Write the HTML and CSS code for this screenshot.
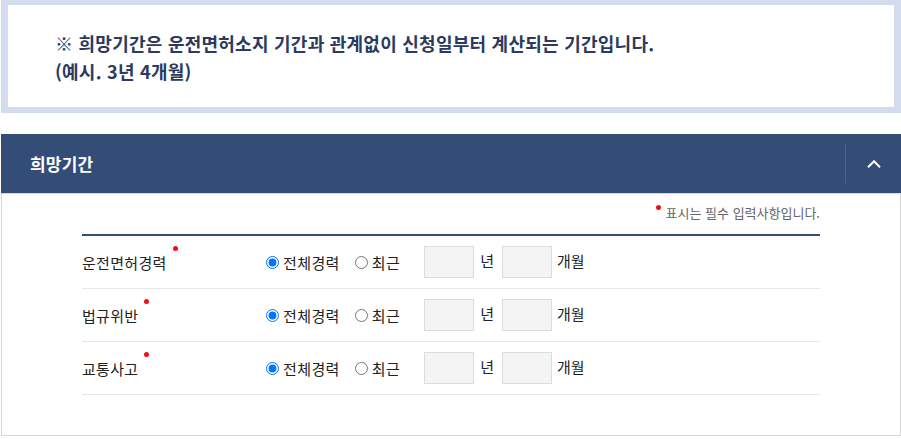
FILE: index.html
```html
<!DOCTYPE html>
<html lang="ko">
<head>
<meta charset="utf-8">
<title>희망기간</title>
<link rel="stylesheet" href="styles.css">
</head>
<body>
<div class="page">
  <div class="notice">
    <p>※ 희망기간은 운전면허소지 기간과 관계없이 신청일부터 계산되는 기간입니다.<br>(예시. 3년 4개월)</p>
  </div>

  <section class="panel">
    <div class="panel-head">
      <h2 class="panel-title">희망기간</h2>
      <button class="toggle" type="button" aria-label="접기">
        <svg width="14" height="8" viewBox="0 0 14 8"><polyline points="1,7.2 7,1.2 13,7.2" fill="none" stroke="#fff" stroke-width="2"/></svg>
      </button>
    </div>
    <div class="panel-body">
      <p class="req-note"><span class="dot"></span>표시는 필수 입력사항입니다.</p>
      <div class="table">
        <div class="row">
          <div class="label"><span class="req">운전면허경력</span></div>
          <label class="opt"><input type="radio" name="r1" checked><span>전체경력</span></label>
          <label class="opt"><input type="radio" name="r1"><span>최근</span></label>
          <span class="box"></span><span class="unit u-year">년</span>
          <span class="box"></span><span class="unit u-month">개월</span>
        </div>
        <div class="row">
          <div class="label"><span class="req">법규위반</span></div>
          <label class="opt"><input type="radio" name="r2" checked><span>전체경력</span></label>
          <label class="opt"><input type="radio" name="r2"><span>최근</span></label>
          <span class="box"></span><span class="unit u-year">년</span>
          <span class="box"></span><span class="unit u-month">개월</span>
        </div>
        <div class="row">
          <div class="label"><span class="req">교통사고</span></div>
          <label class="opt"><input type="radio" name="r3" checked><span>전체경력</span></label>
          <label class="opt"><input type="radio" name="r3"><span>최근</span></label>
          <span class="box"></span><span class="unit u-year">년</span>
          <span class="box"></span><span class="unit u-month">개월</span>
        </div>
      </div>
    </div>
  </section>
</div>
</body>
</html>
```

FILE: styles.css
```css
* { box-sizing: border-box; }
html, body { margin: 0; padding: 0; background: #fff; }
body {
  font-family: "Noto Sans CJK KR", "Noto Sans", sans-serif;
  color: #333;
}
.page { padding-left: 1px; width: 901px; }

.notice {
  border-style: solid;
  border-color: #d3dcec;
  border-width: 5px 7px 6px 7px;
  background: #fff;
  height: 113px;
  padding: 24px 0 0 47px;
}
.notice p {
  margin: 0;
  font-size: 18px;
  font-weight: 700;
  line-height: 28px;
  color: #2b3a5e;
  letter-spacing: 0.25px;
}

.panel { margin-top: 21px; }
.panel-head {
  height: 59px;
  background: #344d77;
  display: flex;
  align-items: center;
  justify-content: space-between;
}
.panel-title {
  margin: 0 0 0 29px;
  font-size: 17px;
  font-weight: 700;
  color: #fff;
  line-height: 20px;
  letter-spacing: 0.2px;
}
.toggle {
  width: 56px;
  height: 39px;
  border: 0;
  border-left: 1px solid #4b6491;
  background: transparent;
  padding: 0;
  display: flex;
  align-items: center;
  justify-content: center;
  margin: 0;
}
.panel-body {
  border: 1px solid #d6d6d6;
  padding: 10px 80px 40px 80px;
}
.req-note {
  margin: 0;
  text-align: right;
  font-size: 13px;
  line-height: 18px;
  color: #666;
}
.dot {
  display: inline-block;
  width: 5px;
  height: 5px;
  border-radius: 50%;
  background: #ee1111;
  vertical-align: top;
  margin: 0 5px 0 0;
  position: relative;
  top: 1px;
}
.table {
  margin-top: 12px;
  border-top: 2px solid #344d77;
}
.row {
  height: 53px;
  border-bottom: 1px solid #e6e6e6;
  display: flex;
  align-items: center;
}
.label {
  width: 184px;
  font-size: 15px;
  letter-spacing: 0.3px;
  color: #222;
}
.req { position: relative; }
.req::after {
  content: "";
  position: absolute;
  right: -11px;
  top: -6px;
  width: 5px;
  height: 5px;
  border-radius: 50%;
  background: #ee1111;
}
.opt {
  display: flex;
  align-items: center;
  font-size: 15px;
  letter-spacing: 0.4px;
  color: #222;
  margin-right: 15px;
}
.opt input {
  margin: 1px 4px 0 0;
  width: 13px;
  height: 13px;
}
.opt + .opt { margin-right: 24px; }
.box {
  width: 50px;
  height: 32px;
  background: #f4f4f4;
  border: 1px solid #dcdcdc;
}
.unit {
  font-size: 15px;
  color: #222;
}
.u-year { margin: 0 8px 4px 6px; }
.u-month { margin: 0 0 4px 5px; }
```
